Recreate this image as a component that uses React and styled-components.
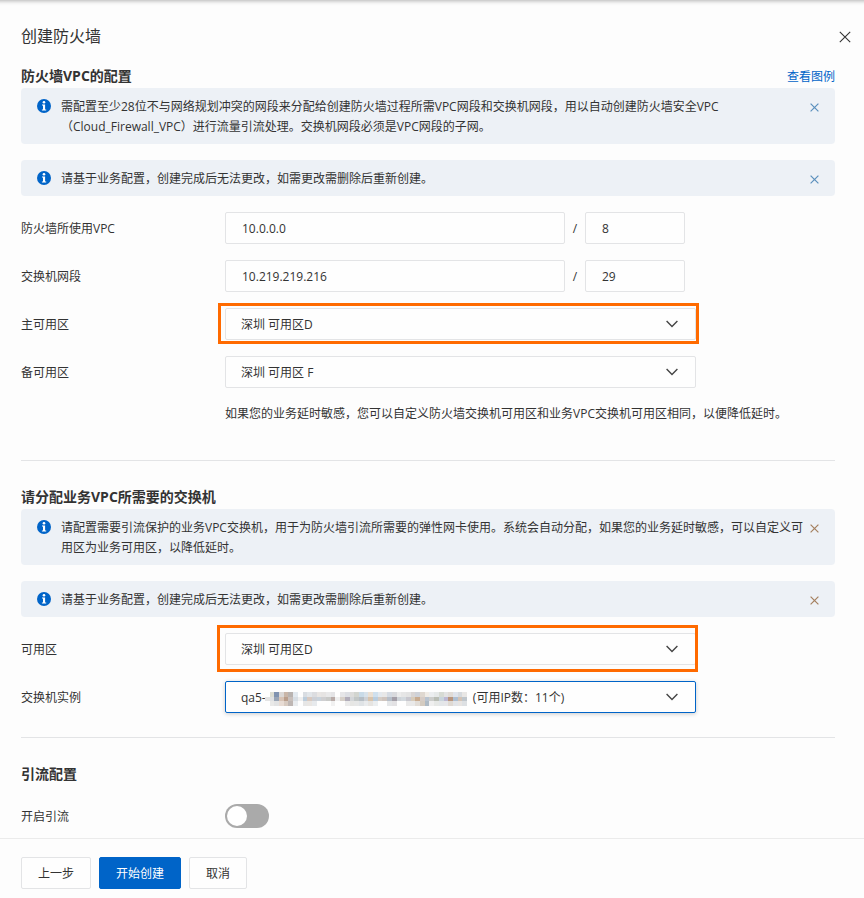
import React, { useState } from 'react';
import styled, { createGlobalStyle, css } from 'styled-components';

const GlobalStyle = createGlobalStyle`
  * {
    box-sizing: border-box;
  }

  body {
    margin: 0;
    background-color: #fdfdfd;
    color: #333;
    font-family: 'Open Sans', 'Noto Sans CJK SC', sans-serif;
    font-size: 12px;
    line-height: 20px;
  }

  button, input, select {
    font: inherit;
    color: inherit;
  }
`;

const Drawer = styled.div`
  display: flex;
  flex-direction: column;
  min-height: 100vh;
  box-shadow: inset 0 6px 4px -5px rgba(0, 0, 0, 0.3);
`;

const Header = styled.header`
  display: flex;
  justify-content: space-between;
  align-items: center;
  padding: 24px 13px 0 21px;
`;

const Title = styled.h1`
  margin: 0;
  font-size: 16px;
  font-weight: 400;
  line-height: 24px;
`;

const IconButton = styled.button`
  display: flex;
  padding: 0;
  border: none;
  background: none;
  color: ${props => props.$color || '#333'};
  cursor: pointer;
`;

const HeaderClose = styled(IconButton)`
  padding-top: 2px;
`;

const Content = styled.main`
  flex: 1;
  padding: 0 29px 0 21px;
`;

const Section = styled.section`
  padding-bottom: ${props => (props.$last ? '6px' : '24px')};

  & + & {
    padding-top: 24px;
    border-top: 1px solid #e3e4e6;
  }
`;

const SectionHeader = styled.div`
  display: flex;
  justify-content: space-between;
  align-items: center;
  padding-top: ${props => (props.$first ? '16px' : '0')};
  margin-bottom: ${props => (props.$spaced ? '14px' : '0')};
`;

const SectionTitle = styled.h2`
  margin: 0;
  font-size: 14px;
  font-weight: 700;
  line-height: 24px;
`;

const Link = styled.a`
  padding-top: 2px;
  color: #0064c8;
  text-decoration: none;

  &:hover {
    text-decoration: underline;
  }
`;

const AlertBox = styled.div`
  display: flex;
  align-items: flex-start;
  margin-bottom: 16px;
  padding: 9px 16px 7px;
  border-radius: 4px;
  background-color: #edf1f6;
`;

const AlertText = styled.p`
  flex: 1;
  margin: 0 5px 0 10px;
`;

const AlertIcon = styled.svg`
  flex: none;
  margin-top: 2px;
`;

const AlertClose = styled(IconButton)`
  flex: none;
  margin-top: 6px;
`;

const Row = styled.div`
  display: flex;
  align-items: center;
  min-height: 32px;
  margin-bottom: 16px;

  &:last-child {
    margin-bottom: 0;
  }
`;

const Label = styled.label`
  flex: none;
  width: 204px;
  padding-top: 2px;
`;

const field = css`
  height: 32px;
  border: 1px solid #e3e4e6;
  border-radius: 2px;
  background-color: #fefefe;
  outline: none;
`;

const Input = styled.input`
  ${field}
  width: ${props => (props.$short ? '100px' : '340px')};
  min-width: 0;
  padding: 0 16px;
`;

const Slash = styled.span`
  width: 20px;
  padding-top: 2px;
  text-align: center;
`;

const SelectWrap = styled.div`
  position: relative;
  width: 471px;

  svg {
    pointer-events: none;
  }
`;

const SelectBox = styled.select`
  ${field}
  display: block;
  width: 100%;
  padding: 2px 15px 0;
  appearance: none;
  ${props => props.$active && css`
    border-color: #0064c8;
    box-shadow: 0 1px 4px rgba(0, 0, 0, 0.2);
  `}
`;

const Arrow = styled.svg`
  position: absolute;
  top: 12px;
  right: 18px;
`;

const Highlight = styled.div`
  position: absolute;
  inset: ${props => props.$inset};
  border: 3px solid #ff6a00;
  pointer-events: none;
`;

const MosaicBox = styled.svg`
  position: absolute;
  top: 11px;
  left: 40px;
`;

const Hint = styled.p`
  margin: 0 0 12px 204px;
`;

const Switch = styled.input`
  appearance: none;
  display: flex;
  align-items: center;
  width: 44px;
  height: 24px;
  margin: 0;
  padding: 2px;
  border-radius: 12px;
  background-color: #aaa;
  cursor: pointer;

  &::before {
    content: '';
    width: 20px;
    height: 20px;
    border-radius: 50%;
    background-color: #fff;
  }

  &:checked {
    justify-content: flex-end;
    background-color: #0064c8;
  }
`;

const Footer = styled.footer`
  display: flex;
  gap: 8px;
  padding: 18px 21px 9px;
  border-top: 1px solid #ebebeb;
`;

const Button = styled.button`
  height: 32px;
  padding: 1px 16px 0;
  border: 1px solid ${props => (props.$primary ? '#0064c8' : '#e3e4e6')};
  border-radius: 2px;
  background-color: ${props => (props.$primary ? '#0064c8' : '#fefefe')};
  color: ${props => (props.$primary ? '#fff' : '#333')};
  cursor: pointer;
`;

function CloseIcon({ size }) {
  return (
    <svg width={size} height={size} viewBox="0 0 12 12" fill="none" stroke="currentColor" strokeWidth={size > 9 ? 1.1 : 1.6}>
      <path d="M0.8 0.8L11.2 11.2M11.2 0.8L0.8 11.2" />
    </svg>
  );
}

// three rows of blocks covering the instance id
const MOSAIC_ROWS = [
  '- dcddd2 8093b0 dbd8d6 c9b6a8 b9b3b0 e3e9ef - d9dde2 e2e6ea dcdde0 e9e6e4 e6e4e3 e9e9ea e4e4e6 - e6e6e8 dddfe4 dddddb d2d5cf c9dbe8 d8e2ea ebe0d3 cfe0ee e4e9ee e8e8e8 d5dbe3 d9dadd ececec e6e6e6 e3e3e3 d9d5d4 cfd2d8 dfd8d0 f0ece6 eceef0 e6e9e9 d7dbd4 e3e3e3 e0dbd6 e0e4ec d6dade e9e7e5',
  'e4e4e4 dfe1e3 99a5b5 d7c3b5 b99e8c c8bfbb d7dde3 efefef bccddc d8c9c0 cdd0d6 c9d3dc cfcfd1 c9cac8 b9aba8 efefef d6d0c9 b1adba d3d6d9 c2c7c6 b6bec5 cdd1d6 d8c4ad b9cddf d5cdc6 cfc5bf b7bfc9 a49fa8 ced3d8 d3d9de c8c7ce d7cbb9 c8ab90 d6ccc6 b9c4d0 cccdcb b9bdb5 c9d4dc bcb8d3 b9967f aebfd2 d3c3b5 bfc6cc',
  '- e9e9e8 e2e3e4 e8dcd4 d8cbc1 beb6b3 e9ecef - e6e6e6 e9e6e3 e7eaed - - - f1f1f1 - - ebebeb e6e6e4 e6e7e7 dfe3e6 e9ebed e6e4e1 ebeef0 - - e4e6e8 e3e2e4 - - e9e9e9 e9e9e9 e2ddd7 d4cbc0 aebac5 efefef e6e8e6 e3e6e9 e6e6e9 dfd9d3 e2e4e8 e7e4e2 dde0e3',
].map(row => row.split(' '));

function Mosaic() {
  return (
    <MosaicBox width="202" height="14" viewBox="0 0 43 3" preserveAspectRatio="none" shapeRendering="crispEdges" aria-hidden="true">
      {MOSAIC_ROWS.map((row, y) =>
        row.map((color, x) => color !== '-' && (
          <rect key={`${x}-${y}`} x={x} y={y} width="1" height="1" fill={`#${color}`} />
        ))
      )}
    </MosaicBox>
  );
}

function Alert({ closeColor, children }) {
  const [open, setOpen] = useState(true);
  if (!open) return null;

  return (
    <AlertBox role="note">
      <AlertIcon width="14" height="14" viewBox="0 0 14 14">
        <circle cx="7" cy="7" r="7" fill="#0064c8" />
        <circle cx="7" cy="3.2" r="1.3" fill="#fff" />
        <path d="M5 5.4H8.1V10.4H9.2V11.6H4.9V10.4H6V6.5H5Z" fill="#fff" />
      </AlertIcon>
      <AlertText>{children}</AlertText>
      <AlertClose type="button" aria-label="关闭" $color={closeColor} onClick={() => setOpen(false)}>
        <CloseIcon size={9} />
      </AlertClose>
    </AlertBox>
  );
}

function SelectField({ id, label, text, highlight, active, children }) {
  return (
    <Row>
      <Label htmlFor={id}>{label}</Label>
      <SelectWrap>
        <SelectBox id={id} $active={active}>
          <option>{text}</option>
        </SelectBox>
        <Arrow width="12" height="8" viewBox="0 0 12 8" fill="none" stroke="#444" strokeWidth="1.4">
          <path d="M0.6 1L6 6.4L11.4 1" />
        </Arrow>
        {children}
        {highlight && <Highlight $inset={highlight} />}
      </SelectWrap>
    </Row>
  );
}

function CidrField({ id, label, address, mask }) {
  return (
    <Row>
      <Label htmlFor={id}>{label}</Label>
      <Input id={id} defaultValue={address} />
      <Slash>/</Slash>
      <Input $short aria-label={`${label} 掩码`} defaultValue={mask} />
    </Row>
  );
}

function App() {
  return (
    <>
      <GlobalStyle />
      <Drawer>
        <Header>
          <Title>创建防火墙</Title>
          <HeaderClose type="button" aria-label="关闭">
            <CloseIcon size={12} />
          </HeaderClose>
        </Header>
        <Content>
          <Section>
            <SectionHeader $first>
              <SectionTitle>防火墙VPC的配置</SectionTitle>
              <Link href="#example">查看图例</Link>
            </SectionHeader>
            <Alert closeColor="#5b90bd">
              需配置至少28位不与网络规划冲突的网段来分配给创建防火墙过程所需VPC网段和交换机网段，用以自动创建防火墙安全VPC（Cloud_Firewall_VPC）进行流量引流处理。交换机网段必须是VPC网段的子网。
            </Alert>
            <Alert closeColor="#5b90bd">请基于业务配置，创建完成后无法更改，如需更改需删除后重新创建。</Alert>
            <CidrField id="vpc" label="防火墙所使用VPC" address="10.0.0.0" mask="8" />
            <CidrField id="vswitch" label="交换机网段" address="10.219.219.216" mask="29" />
            <SelectField id="zone-main" label="主可用区" text="深圳 可用区D" highlight="-5px -3px -4px -7px" />
            <SelectField id="zone-backup" label="备可用区" text="深圳 可用区 F" />
            <Hint>如果您的业务延时敏感，您可以自定义防火墙交换机可用区和业务VPC交换机可用区相同，以便降低延时。</Hint>
          </Section>
          <Section>
            <SectionHeader>
              <SectionTitle>请分配业务VPC所需要的交换机</SectionTitle>
            </SectionHeader>
            <Alert closeColor="#a5805f">
              请配置需要引流保护的业务VPC交换机，用于为防火墙引流所需要的弹性网卡使用。系统会自动分配，如果您的业务延时敏感，可以自定义可用区为业务可用区，以降低延时。
            </Alert>
            <Alert closeColor="#a5805f">请基于业务配置，创建完成后无法更改，如需更改需删除后重新创建。</Alert>
            <SelectField id="zone" label="可用区" text="深圳 可用区D" highlight="-8px -2px -7px -8px" />
            <SelectField
              id="instance"
              label="交换机实例"
              text={`qa5-${'\u2003'.repeat(17)} (可用IP数：11个)`}
              active
            >
              <Mosaic />
            </SelectField>
          </Section>
          <Section $last>
            <SectionHeader $spaced>
              <SectionTitle>引流配置</SectionTitle>
            </SectionHeader>
            <Row>
              <Label htmlFor="drain">开启引流</Label>
              <Switch id="drain" type="checkbox" role="switch" />
            </Row>
          </Section>
        </Content>
        <Footer>
          <Button type="button">上一步</Button>
          <Button type="button" $primary>开始创建</Button>
          <Button type="button">取消</Button>
        </Footer>
      </Drawer>
    </>
  );
}

export default App;
